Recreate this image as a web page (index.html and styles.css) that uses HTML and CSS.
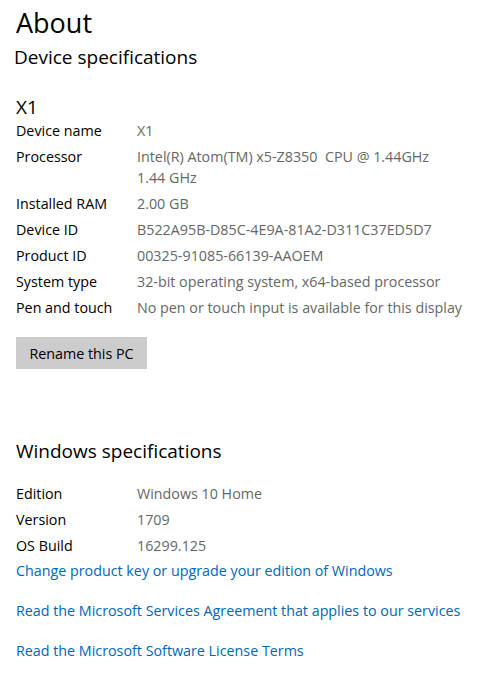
FILE: index.html
```html
<!DOCTYPE html>
<html>
<head>
<meta charset="utf-8">
<link rel="stylesheet" href="styles.css">
</head>
<body>
<main class="page">
  <h1 class="title">About</h1>
  <h2 class="section">Device specifications</h2>
  <div class="device">X1</div>
  <dl class="specs">
    <div class="row"><dt>Device name</dt><dd>X1</dd></div>
    <div class="row"><dt>Processor</dt><dd>Intel(R) Atom(TM) x5-Z8350&nbsp; CPU @ 1.44GHz<br>1.44 GHz</dd></div>
    <div class="row"><dt>Installed RAM</dt><dd>2.00 GB</dd></div>
    <div class="row"><dt>Device ID</dt><dd>B522A95B-D85C-4E9A-81A2-D311C37ED5D7</dd></div>
    <div class="row"><dt>Product ID</dt><dd>00325-91085-66139-AAOEM</dd></div>
    <div class="row"><dt>System type</dt><dd>32-bit operating system, x64-based processor</dd></div>
    <div class="row"><dt>Pen and touch</dt><dd>No pen or touch input is available for this display</dd></div>
  </dl>
  <button class="btn">Rename this PC</button>
  <h2 class="section win">Windows specifications</h2>
  <dl class="specs win-specs">
    <div class="row"><dt>Edition</dt><dd>Windows 10 Home</dd></div>
    <div class="row"><dt>Version</dt><dd>1709</dd></div>
    <div class="row"><dt>OS Build</dt><dd>16299.125</dd></div>
  </dl>
  <a class="link first" href="#">Change product key or upgrade your edition of Windows</a>
  <a class="link" href="#">Read the Microsoft Services Agreement that applies to our services</a>
  <a class="link" href="#">Read the Microsoft Software License Terms</a>
</main>
</body>
</html>
```
FILE: styles.css
```css
html, body {
  margin: 0;
  padding: 0;
  background: #ffffff;
}
body {
  font-family: "Open Sans", "Noto Sans", sans-serif;
  color: #000000;
}
.page {
  padding: 3px 0 0 16px;
  display: flex;
  flex-direction: column;
  align-items: flex-start;
}
.title {
  margin: 0;
  font-size: 27px;
  font-weight: 400;
  line-height: 40px;
  height: 40px;
}
.section {
  margin: 0 0 0 -2px;
  font-size: 19px;
  font-weight: 400;
  line-height: 28px;
}
.device {
  margin-top: 26px;
  font-size: 19px;
  line-height: 20px;
}
.specs {
  margin: 0;
  display: flex;
  flex-direction: column;
}
.row {
  display: flex;
  padding: 2.5px 0;
  font-size: 14.3px;
  line-height: 21px;
}
.row dt {
  width: 121px;
  flex: none;
}
.row dd {
  margin: 0;
  color: #666666;
}
.btn {
  margin-top: 17px;
  height: 32px;
  width: 131px;
  border: none;
  background: #cccccc;
  color: #000000;
  font-family: inherit;
  font-size: 14.3px;
  padding: 0;
}
.section.win {
  margin-top: 68px;
  margin-left: 0;
}
.win-specs {
  margin-top: 15px;
}
.link {
  color: #0067b8;
  text-decoration: none;
  font-size: 14.3px;
  line-height: 26px;
  margin-top: 14px;
}
.link.first {
  margin-top: 0;
}
```
